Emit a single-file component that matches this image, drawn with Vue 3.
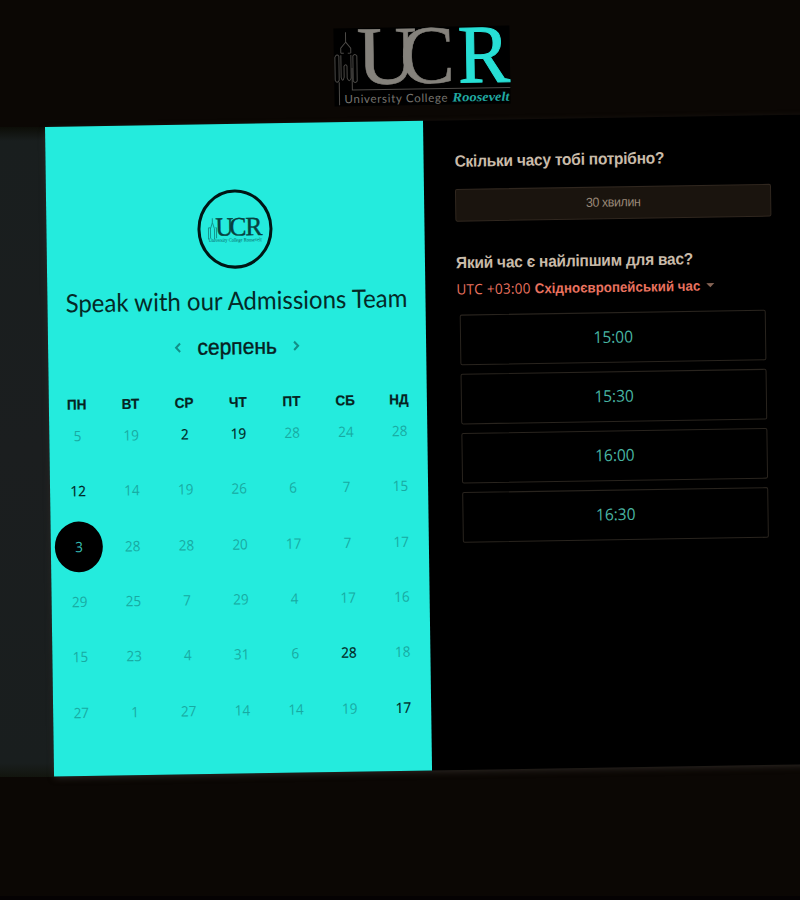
<script setup>
const weekdays = ['ПН', 'ВТ', 'СР', 'ЧТ', 'ПТ', 'СБ', 'НД']
const weeks = [
  [5, 19, 2, 19, 28, 24, 28],
  [12, 14, 19, 26, 6, 7, 15],
  [3, 28, 28, 20, 17, 7, 17],
  [29, 25, 7, 29, 4, 17, 16],
  [15, 23, 4, 31, 6, 28, 18],
  [27, 1, 27, 14, 14, 19, 17],
]
const available = ['0-2', '0-3', '1-0', '4-5', '5-6']
const selected = '2-0'
const slots = ['15:00', '15:30', '16:00', '16:30']

function dayClass(row, col) {
  const key = `${row}-${col}`
  return { available: available.includes(key), selected: key === selected }
}
</script>

<template>
  <div class="page">
    <header class="brand">
      <svg class="logo" viewBox="0 0 176 78" width="176" height="78">
        <rect width="176" height="78" fill="#000" />
        <g fill="none" stroke="#4c4a47" stroke-width="1">
          <path d="M12 4v10l-5 6v5M12 14l5 6v5M7 25h3M14 25h3M18 40v22h158M5 54v23" />
          <path d="M1 29q2-4 4-1v24q-2 4-4 0zM19 28q2-3 4 0v25q-2 3-4 0zM7 27v22q1.500 6 3 0V38q2-3 3 0v12q2 5 4 0V27" />
        </g>
        <g class="serif" font-size="83">
          <text x="23" y="56" textLength="60" lengthAdjust="spacingAndGlyphs" fill="#85827c" stroke="#85827c" stroke-width="0.6">U</text>
          <text x="66" y="56" textLength="55" lengthAdjust="spacingAndGlyphs" fill="#85827c" stroke="#85827c" stroke-width="0.6">C</text>
          <text x="124" y="56" textLength="52" lengthAdjust="spacingAndGlyphs" fill="#27dfd5" stroke="#27dfd5" stroke-width="1">R</text>
        </g>
        <text class="sans" x="10" y="75" font-size="11.500" textLength="103" fill="#77746f">University College</text>
        <text class="serif" x="118" y="75" font-size="13" textLength="57" lengthAdjust="spacingAndGlyphs" font-weight="bold" font-style="italic" fill="#20a9a2">Roosevelt</text>
      </svg>
    </header>

    <div class="stage">
      <main class="modal">
        <section class="calendar">
          <div class="avatar">
            <svg viewBox="0 0 56 28" width="56" height="28">
              <path d="M1 23V12h2v10M3 13l2-6 2 6v10M8 12h1v10M5 7V3" fill="none" stroke="#128f88" stroke-width="0.9" />
              <g class="serif" font-size="25" fill="#07403e" stroke="#07403e" stroke-width="0.4">
                <text x="8" y="19.500" textLength="18" lengthAdjust="spacingAndGlyphs">U</text>
                <text x="22" y="19.500" textLength="17" lengthAdjust="spacingAndGlyphs">C</text>
                <text x="38" y="19.500" textLength="17" lengthAdjust="spacingAndGlyphs">R</text>
              </g>
              <text class="serif" x="1" y="25.500" font-size="5" textLength="53" lengthAdjust="spacingAndGlyphs" fill="#07605c">University College Roosevelt</text>
            </svg>
          </div>
          <h1 class="title">Speak with our Admissions Team</h1>
          <div class="month">
            <svg class="arrow" viewBox="0 0 8 12" width="8" height="12"><path d="M6 2L2 6l4 4" /></svg>
            <span class="month-name">серпень</span>
            <svg class="arrow" viewBox="0 0 8 12" width="8" height="12"><path d="M2 2l4 4-4 4" /></svg>
          </div>
          <div class="weekdays">
            <span v-for="name in weekdays" :key="name">{{ name }}</span>
          </div>
          <div class="days">
            <template v-for="(week, row) in weeks" :key="row">
              <span v-for="(day, col) in week" :key="col" class="day" :class="dayClass(row, col)">{{ day }}</span>
            </template>
          </div>
        </section>

        <section class="details">
          <h2 class="question">Скільки часу тобі потрібно?</h2>
          <button class="duration">30 хвилин</button>
          <h2 class="question second">Який час є найліпшим для вас?</h2>
          <div class="zone">
            <span class="offset">UTC +03:00</span>
            <span class="zone-name">Східноєвропейський час</span>
            <i class="caret"></i>
          </div>
          <div class="slots">
            <button v-for="slot in slots" :key="slot" class="slot">{{ slot }}</button>
          </div>
        </section>
      </main>
    </div>
  </div>
</template>

<style>
body {
  margin: 0;
  background: #0b0704;
}
</style>

<style scoped>
.page {
  width: 800px;
  height: 900px;
  box-sizing: border-box;
  overflow: hidden;
  background: #0b0704;
  border-bottom: 4px solid #050203;
  font-family: "Liberation Sans", sans-serif;
}
.brand {
  height: 127px;
  box-sizing: border-box;
  padding: 27px 0 0 334px;
}
.logo {
  display: block;
  overflow: visible;
  transform: rotate(-0.9deg);
}
.serif {
  font-family: "Liberation Serif", serif;
}
.sans {
  font-family: Lato, sans-serif;
}
.stage {
  height: 650px;
  padding-left: 45px;
  background: linear-gradient(#0c0d07, #191e1e 14px, #1b1e1f 50%, #191e1e 636px, #12150e) 0 0 / 60px 100% no-repeat;
}
.modal {
  display: flex;
  width: 800px;
  height: 615px;
  transform-origin: 0 0;
  transform: matrix(1, -0.0163, 0.0147, 1.0562, 0, 0);
  box-shadow: 0 2px 7px -1px #302b27;
  background: #000;
}
.calendar {
  width: 378px;
  flex: none;
  background: #24ebdd;
  color: #07211f;
}
.avatar {
  width: 69px;
  height: 69px;
  margin: 62px auto 0;
  border: 3px solid #001514;
  border-radius: 50%;
  display: flex;
  align-items: center;
  justify-content: center;
  position: relative;
  left: -0.5px;
}
.title {
  height: 36px;
  margin: 12px 0 0;
  font: 400 24px/36px Lato, sans-serif;
  text-align: center;
  white-space: nowrap;
  color: #042927;
}
.month {
  height: 30px;
  margin-top: 10.5px;
  display: flex;
  align-items: center;
  justify-content: center;
  gap: 15px;
}
.month-name {
  font-size: 21px;
  line-height: 30px;
  -webkit-text-stroke: 0.4px #07211f;
}
.arrow {
  fill: none;
  stroke: #128f88;
  stroke-width: 2;
}
.weekdays {
  display: grid;
  grid-template-columns: repeat(7, 53.7px);
  margin: 28.5px 0 0 1px;
  height: 20px;
  font-size: 13.5px;
  font-weight: 700;
  line-height: 20px;
  text-align: center;
  color: #062321;
  -webkit-text-stroke: 0.2px #062321;
}
.days {
  display: grid;
  grid-template-columns: repeat(7, 53.7px);
  grid-auto-rows: 52.3px;
  margin: -7px 0 0 1.3px;
  place-items: center;
}
.day {
  width: 48px;
  height: 48px;
  border-radius: 50%;
  font: 400 13.5px/48px "Open Sans", sans-serif;
  text-align: center;
  color: #18aaa2;
}
.day.available {
  color: #001f1d;
  -webkit-text-stroke: 0.2px #001f1d;
}
.day.selected {
  background: #000;
  color: #36bfb5;
}
.details {
  flex: 1;
  padding: 29px 0 0 31px;
}
.question {
  margin: 0;
  height: 20px;
  font-size: 15.5px;
  line-height: 20px;
  font-weight: 700;
  letter-spacing: -0.24px;
  white-space: nowrap;
  color: #c9bba9;
}
.duration {
  display: block;
  width: 316px;
  height: 31px;
  margin-top: 15.5px;
  padding: 0;
  border: 1px solid #30271f;
  border-radius: 2px;
  background: #1a140e;
  font: 400 12.5px/27px "Liberation Sans", sans-serif;
  letter-spacing: -0.45px;
  color: #998878;
}
.second {
  margin-top: 29.5px;
}
.zone {
  display: flex;
  align-items: center;
  height: 20px;
  margin-top: 5px;
  white-space: nowrap;
  color: #e9725f;
}
.offset {
  font: 400 13.5px/20px "Open Sans", sans-serif;
  letter-spacing: 0.3px;
  margin-right: 4px;
}
.zone-name {
  font-size: 13.3px;
  font-weight: 700;
}
.caret {
  margin-left: 6px;
  border: 4px solid transparent;
  border-top-color: #866455;
  border-bottom: 0;
}
.slots {
  display: flex;
  flex-direction: column;
  gap: 8px;
  margin: 13.5px 0 0 3.2px;
}
.slot {
  width: 306px;
  height: 48px;
  padding: 0;
  border: 1px solid #29241e;
  border-radius: 2px;
  background: #000;
  font: 400 15.5px/45px "Open Sans", sans-serif;
  color: #48b5a3;
}
</style>
